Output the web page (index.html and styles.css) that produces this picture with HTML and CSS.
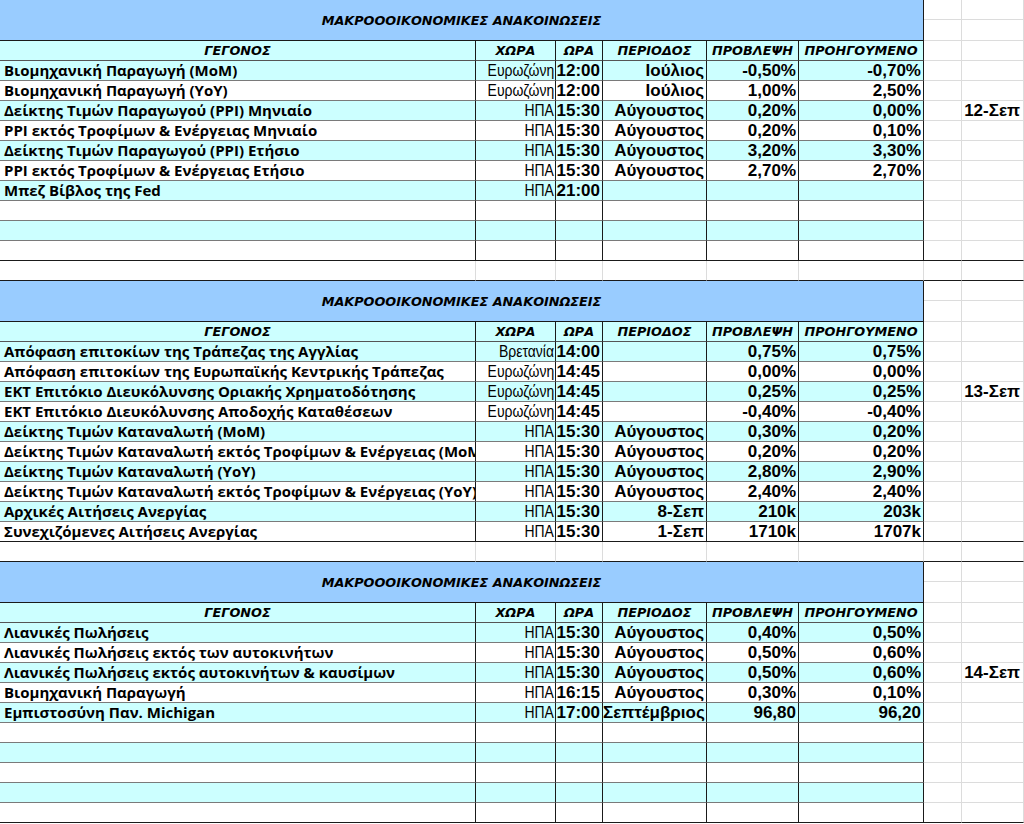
FILE: index.html
```html
<!DOCTYPE html>
<html lang="el">
<head>
<meta charset="utf-8">
<title>Μακροοικονομικές ανακοινώσεις</title>
<link rel="stylesheet" href="styles.css">
</head>
<body>
<div class="sheet">

  <!-- Section 1 -->
  <div class="title-row">
    <div class="ttl">ΜΑΚΡΟΟΟΙΚΟΝΟΜΙΚΕΣ ΑΝΑΚΟΙΝΩΣΕΙΣ</div>
    <div class="c x"></div><div class="c x h"></div>
    <div class="c x"></div><div class="c x h"></div>
  </div>
  <div class="row hdr"><div class="c">ΓΕΓΟΝΟΣ</div><div class="c">ΧΩΡΑ</div><div class="c">ΩΡΑ</div><div class="c">ΠΕΡΙΟΔΟΣ</div><div class="c">ΠΡΟΒΛΕΨΗ</div><div class="c">ΠΡΟΗΓΟΥΜΕΝΟ</div><div class="c x"></div><div class="c x h"></div></div>
  <div class="row alt"><div class="c a">Βιομηχανική Παραγωγή (MoM)</div><div class="c b"><span>Ευρωζώνη</span></div><div class="c">12:00</div><div class="c">Ιούλιος</div><div class="c">-0,50%</div><div class="c">-0,70%</div><div class="c x"></div><div class="c x h"></div></div>
  <div class="row"><div class="c a">Βιομηχανική Παραγωγή (YoY)</div><div class="c b"><span>Ευρωζώνη</span></div><div class="c">12:00</div><div class="c">Ιούλιος</div><div class="c">1,00%</div><div class="c">2,50%</div><div class="c x"></div><div class="c x h"></div></div>
  <div class="row alt"><div class="c a">Δείκτης Τιμών Παραγωγού (PPI) Μηνιαίο</div><div class="c b"><span>ΗΠΑ</span></div><div class="c">15:30</div><div class="c">Αύγουστος</div><div class="c">0,20%</div><div class="c">0,00%</div><div class="c x"></div><div class="c x h">12-Σεπ</div></div>
  <div class="row"><div class="c a">PPI εκτός Τροφίμων &amp; Ενέργειας Μηνιαίο</div><div class="c b"><span>ΗΠΑ</span></div><div class="c">15:30</div><div class="c">Αύγουστος</div><div class="c">0,20%</div><div class="c">0,10%</div><div class="c x"></div><div class="c x h"></div></div>
  <div class="row alt"><div class="c a">Δείκτης Τιμών Παραγωγού (PPI) Ετήσιο</div><div class="c b"><span>ΗΠΑ</span></div><div class="c">15:30</div><div class="c">Αύγουστος</div><div class="c">3,20%</div><div class="c">3,30%</div><div class="c x"></div><div class="c x h"></div></div>
  <div class="row"><div class="c a">PPI εκτός Τροφίμων &amp; Ενέργειας Ετήσιο</div><div class="c b"><span>ΗΠΑ</span></div><div class="c">15:30</div><div class="c">Αύγουστος</div><div class="c">2,70%</div><div class="c">2,70%</div><div class="c x"></div><div class="c x h"></div></div>
  <div class="row alt"><div class="c a">Μπεζ Βίβλος της Fed</div><div class="c b"><span>ΗΠΑ</span></div><div class="c">21:00</div><div class="c"></div><div class="c"></div><div class="c"></div><div class="c x"></div><div class="c x h"></div></div>
  <div class="row"><div class="c a"></div><div class="c"></div><div class="c"></div><div class="c"></div><div class="c"></div><div class="c"></div><div class="c x"></div><div class="c x h"></div></div>
  <div class="row alt"><div class="c a"></div><div class="c"></div><div class="c"></div><div class="c"></div><div class="c"></div><div class="c"></div><div class="c x"></div><div class="c x h"></div></div>
  <div class="row end"><div class="c a"></div><div class="c"></div><div class="c"></div><div class="c"></div><div class="c"></div><div class="c"></div><div class="c x"></div><div class="c x h"></div></div>
  <div class="row blank"><div class="c"></div><div class="c"></div><div class="c"></div><div class="c"></div><div class="c"></div><div class="c"></div><div class="c x"></div><div class="c x h"></div></div>

  <!-- Section 2 -->
  <div class="title-row">
    <div class="ttl">ΜΑΚΡΟΟΟΙΚΟΝΟΜΙΚΕΣ ΑΝΑΚΟΙΝΩΣΕΙΣ</div>
    <div class="c x"></div><div class="c x h"></div>
    <div class="c x"></div><div class="c x h"></div>
  </div>
  <div class="row hdr"><div class="c">ΓΕΓΟΝΟΣ</div><div class="c">ΧΩΡΑ</div><div class="c">ΩΡΑ</div><div class="c">ΠΕΡΙΟΔΟΣ</div><div class="c">ΠΡΟΒΛΕΨΗ</div><div class="c">ΠΡΟΗΓΟΥΜΕΝΟ</div><div class="c x"></div><div class="c x h"></div></div>
  <div class="row alt"><div class="c a">Απόφαση επιτοκίων της Τράπεζας της Αγγλίας</div><div class="c b"><span>Βρετανία</span></div><div class="c">14:00</div><div class="c"></div><div class="c">0,75%</div><div class="c">0,75%</div><div class="c x"></div><div class="c x h"></div></div>
  <div class="row"><div class="c a">Απόφαση επιτοκίων της Ευρωπαϊκής Κεντρικής Τράπεζας</div><div class="c b"><span>Ευρωζώνη</span></div><div class="c">14:45</div><div class="c"></div><div class="c">0,00%</div><div class="c">0,00%</div><div class="c x"></div><div class="c x h"></div></div>
  <div class="row alt"><div class="c a">ΕΚΤ Επιτόκιο Διευκόλυνσης Οριακής Χρηματοδότησης</div><div class="c b"><span>Ευρωζώνη</span></div><div class="c">14:45</div><div class="c"></div><div class="c">0,25%</div><div class="c">0,25%</div><div class="c x"></div><div class="c x h">13-Σεπ</div></div>
  <div class="row"><div class="c a">ΕΚΤ Επιτόκιο Διευκόλυνσης Αποδοχής Καταθέσεων</div><div class="c b"><span>Ευρωζώνη</span></div><div class="c">14:45</div><div class="c"></div><div class="c">-0,40%</div><div class="c">-0,40%</div><div class="c x"></div><div class="c x h"></div></div>
  <div class="row alt"><div class="c a">Δείκτης Τιμών Καταναλωτή (MoM)</div><div class="c b"><span>ΗΠΑ</span></div><div class="c">15:30</div><div class="c">Αύγουστος</div><div class="c">0,30%</div><div class="c">0,20%</div><div class="c x"></div><div class="c x h"></div></div>
  <div class="row"><div class="c a">Δείκτης Τιμών Καταναλωτή εκτός Τροφίμων &amp; Ενέργειας (MoM)</div><div class="c b"><span>ΗΠΑ</span></div><div class="c">15:30</div><div class="c">Αύγουστος</div><div class="c">0,20%</div><div class="c">0,20%</div><div class="c x"></div><div class="c x h"></div></div>
  <div class="row alt"><div class="c a">Δείκτης Τιμών Καταναλωτή (YoY)</div><div class="c b"><span>ΗΠΑ</span></div><div class="c">15:30</div><div class="c">Αύγουστος</div><div class="c">2,80%</div><div class="c">2,90%</div><div class="c x"></div><div class="c x h"></div></div>
  <div class="row"><div class="c a">Δείκτης Τιμών Καταναλωτή εκτός Τροφίμων &amp; Ενέργειας (YoY)</div><div class="c b"><span>ΗΠΑ</span></div><div class="c">15:30</div><div class="c">Αύγουστος</div><div class="c">2,40%</div><div class="c">2,40%</div><div class="c x"></div><div class="c x h"></div></div>
  <div class="row alt"><div class="c a">Αρχικές Αιτήσεις Ανεργίας</div><div class="c b"><span>ΗΠΑ</span></div><div class="c">15:30</div><div class="c">8-Σεπ</div><div class="c">210k</div><div class="c">203k</div><div class="c x"></div><div class="c x h"></div></div>
  <div class="row end"><div class="c a">Συνεχιζόμενες Αιτήσεις Ανεργίας</div><div class="c b"><span>ΗΠΑ</span></div><div class="c">15:30</div><div class="c">1-Σεπ</div><div class="c">1710k</div><div class="c">1707k</div><div class="c x"></div><div class="c x h"></div></div>
  <div class="row blank"><div class="c"></div><div class="c"></div><div class="c"></div><div class="c"></div><div class="c"></div><div class="c"></div><div class="c x"></div><div class="c x h"></div></div>

  <!-- Section 3 -->
  <div class="title-row">
    <div class="ttl">ΜΑΚΡΟΟΟΙΚΟΝΟΜΙΚΕΣ ΑΝΑΚΟΙΝΩΣΕΙΣ</div>
    <div class="c x"></div><div class="c x h"></div>
    <div class="c x"></div><div class="c x h"></div>
  </div>
  <div class="row hdr"><div class="c">ΓΕΓΟΝΟΣ</div><div class="c">ΧΩΡΑ</div><div class="c">ΩΡΑ</div><div class="c">ΠΕΡΙΟΔΟΣ</div><div class="c">ΠΡΟΒΛΕΨΗ</div><div class="c">ΠΡΟΗΓΟΥΜΕΝΟ</div><div class="c x"></div><div class="c x h"></div></div>
  <div class="row alt"><div class="c a">Λιανικές Πωλήσεις</div><div class="c b"><span>ΗΠΑ</span></div><div class="c">15:30</div><div class="c">Αύγουστος</div><div class="c">0,40%</div><div class="c">0,50%</div><div class="c x"></div><div class="c x h"></div></div>
  <div class="row"><div class="c a">Λιανικές Πωλήσεις εκτός των αυτοκινήτων</div><div class="c b"><span>ΗΠΑ</span></div><div class="c">15:30</div><div class="c">Αύγουστος</div><div class="c">0,50%</div><div class="c">0,60%</div><div class="c x"></div><div class="c x h"></div></div>
  <div class="row alt"><div class="c a">Λιανικές Πωλήσεις εκτός αυτοκινήτων &amp; καυσίμων</div><div class="c b"><span>ΗΠΑ</span></div><div class="c">15:30</div><div class="c">Αύγουστος</div><div class="c">0,50%</div><div class="c">0,60%</div><div class="c x"></div><div class="c x h">14-Σεπ</div></div>
  <div class="row"><div class="c a">Βιομηχανική Παραγωγή</div><div class="c b"><span>ΗΠΑ</span></div><div class="c">16:15</div><div class="c">Αύγουστος</div><div class="c">0,30%</div><div class="c">0,10%</div><div class="c x"></div><div class="c x h"></div></div>
  <div class="row alt"><div class="c a">Εμπιστοσύνη Παν. Michigan</div><div class="c b"><span>ΗΠΑ</span></div><div class="c">17:00</div><div class="c">Σεπτέμβριος</div><div class="c">96,80</div><div class="c">96,20</div><div class="c x"></div><div class="c x h"></div></div>
  <div class="row"><div class="c a"></div><div class="c"></div><div class="c"></div><div class="c"></div><div class="c"></div><div class="c"></div><div class="c x"></div><div class="c x h"></div></div>
  <div class="row alt"><div class="c a"></div><div class="c"></div><div class="c"></div><div class="c"></div><div class="c"></div><div class="c"></div><div class="c x"></div><div class="c x h"></div></div>
  <div class="row"><div class="c a"></div><div class="c"></div><div class="c"></div><div class="c"></div><div class="c"></div><div class="c"></div><div class="c x"></div><div class="c x h"></div></div>
  <div class="row alt"><div class="c a"></div><div class="c"></div><div class="c"></div><div class="c"></div><div class="c"></div><div class="c"></div><div class="c x"></div><div class="c x h"></div></div>
  <div class="row end"><div class="c a"></div><div class="c"></div><div class="c"></div><div class="c"></div><div class="c"></div><div class="c"></div><div class="c x"></div><div class="c x h"></div></div>

</div>
</body>
</html>
```

FILE: styles.css
```css
html, body {
  margin: 0;
  padding: 0;
  background: #ffffff;
}

.sheet {
  width: 1024px;
  height: 824px;
  overflow: hidden;
}

.row {
  display: grid;
  grid-template-columns: 476px 80px 47px 104px 92px 125px 38px 62px;
  height: 20px;
}

.c {
  box-sizing: border-box;
  height: 20px;
  border-right: 1px solid #1a1a1a;
  border-bottom: 1px solid #7a7a7a;
  background: #ffffff;
  color: #000;
  white-space: nowrap;
  text-align: right;
  padding: 0 2px 0 0;
  font-family: "Liberation Sans", Arial, sans-serif;
  font-weight: bold;
  font-size: 17px;
  line-height: 19px;
}

.row.alt > .c {
  background: #ccffff;
}

/* event names: clipped at the column edge like a spreadsheet cell */
.c.a {
  text-align: left;
  padding: 0 0 0 4px;
  overflow-x: clip;
  overflow-y: visible;
  font-family: "Open Sans", Tahoma, sans-serif;
  font-size: 15px;
  line-height: 19px;
}

/* country: narrow regular face */
.c.b {
  display: flex;
  justify-content: flex-end;
  padding-right: 1px;
  font-weight: normal;
}

.c.b span {
  display: inline-block;
  transform: scaleX(0.82);
  transform-origin: right center;
}

/* Excel gridline columns outside the table */
.row > .c.x,
.row.alt > .c.x,
.title-row > .c.x {
  background: #ffffff;
  border-right-color: #dcdcdc;
  border-bottom-color: #dcdcdc;
}

.c.h {
  padding-right: 3px;
}

/* header row */
.hdr > .c {
  background: #ccffff;
  text-align: center;
  padding: 0;
  font-family: "DejaVu Sans", Verdana, sans-serif;
  font-style: italic;
  font-size: 12.8px;
  border-bottom-color: #555;
}

/* last row of each table */
.row.end > .c {
  border-bottom-color: #1a1a1a;
}

/* empty spreadsheet row between tables */
.row.blank > .c {
  border-right-color: #dcdcdc;
  border-bottom-color: #1a1a1a;
}

/* title band */
.title-row {
  display: grid;
  grid-template-columns: 924px 38px 62px;
  grid-template-rows: 20px 21px;
}

.title-row > .c {
  height: auto;
}

.ttl {
  grid-row: 1 / 3;
  box-sizing: border-box;
  background: #99ccff;
  border-right: 1px solid #1a1a1a;
  border-bottom: 1px solid #1a1a1a;
  display: flex;
  align-items: center;
  justify-content: center;
  font-family: "DejaVu Sans", Verdana, sans-serif;
  font-weight: bold;
  font-style: italic;
  font-size: 12.8px;
  color: #000;
}
```
